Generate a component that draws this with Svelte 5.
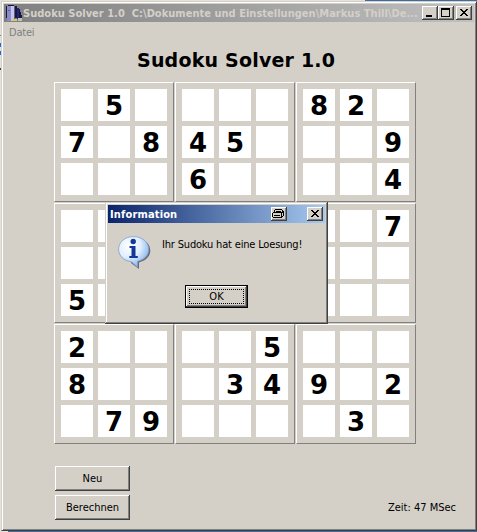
<script>
  const boxes = [
    [0, 5, 0, 7, 0, 8, 0, 0, 0],
    [0, 0, 0, 4, 5, 0, 6, 0, 0],
    [8, 2, 0, 0, 0, 9, 0, 0, 4],
    [0, 0, 0, 0, 0, 0, 5, 0, 0],
    [0, 0, 0, 0, 0, 0, 0, 0, 0],
    [0, 0, 7, 0, 0, 0, 0, 0, 0],
    [2, 0, 0, 8, 0, 0, 0, 7, 9],
    [0, 0, 5, 0, 3, 4, 0, 0, 0],
    [0, 0, 0, 9, 0, 2, 0, 3, 0]
  ];
</script>

<div class="desktop">
  <div class="window">
    <header class="bar">
      <svg class="app" width="16" height="16" viewBox="0 0 16 16" shape-rendering="crispEdges">
        <path fill="#181830" d="M0 1h2v12H0zM2 0h6v1H2zM9 1h2v12H9zM13 4h1v3h1v3h1v3h-3z" />
        <path fill="#8c8ccc" d="M1 1h4v15H1z" />
        <path fill="#c4c4ec" d="M5 1h3v15H5z" />
        <path fill="#5c5c94" d="M8 1h1v14H8zM2 5h2v1H2z" />
        <path fill="#20208c" d="M11 3h2v11h-2z" />
        <path fill="#d8cc40" d="M7 14h4v2H7z" />
        <path fill="#c0c0c0" d="M12 13h4v3h-4z" />
      </svg>
      <span class="caption">Sudoku Solver 1.0&nbsp; C:\Dokumente und Einstellungen\Markus Thill\De...</span>
      <button class="tb" aria-label="Minimize"><svg width="16" height="14" shape-rendering="crispEdges"><path d="M4 9h6v2H4z" /></svg></button>
      <button class="tb" aria-label="Maximize"><svg width="16" height="14" shape-rendering="crispEdges"><path fill-rule="evenodd" d="M3 2h9v9H3zM4 4v6h7V4z" /></svg></button>
      <button class="tb close" aria-label="Close"><svg width="16" height="14" shape-rendering="crispEdges"><path d="M4 3h2v1h1v1h2v-1h1v-1h2v1h-1v1h-1v1h-1v1h1v1h1v1h1v1h-2v-1h-1v-1h-2v1h-1v1h-2v-1h1v-1h1v-1h1v-1h-1v-1h-1v-1h-1z" /></svg></button>
    </header>
    <nav>Datei</nav>
    <h1>Sudoku Solver 1.0</h1>
    <main>
      {#each boxes as box}
        <div class="box">
          {#each box as n}
            <div class="cell">{n || ''}</div>
          {/each}
        </div>
      {/each}
    </main>
    <footer>
      <div class="actions">
        <button class="btn">Neu</button>
        <button class="btn">Berechnen</button>
      </div>
      <span class="time">Zeit: 47 MSec</span>
    </footer>
  </div>

  <div class="dialog" role="dialog">
    <header class="dbar">
      <span class="dcap">Information</span>
      <button class="tb print" aria-label="Print"><svg width="16" height="14" shape-rendering="crispEdges"><path d="M4 2h7v1H4zM3 3h1v2H3zM11 3h1v2h-1zM5 4h5v1H5zM2 5h10v1H2zM1 6h1v4H1zM10 6h1v5h-1zM12 4h1v5h-1zM3 8h6v1H3zM2 10h9v1H2zM11 9h1v1h-1z" /></svg></button>
      <button class="tb close" aria-label="Close"><svg width="16" height="14" shape-rendering="crispEdges"><path d="M4 3h2v1h1v1h2v-1h1v-1h2v1h-1v1h-1v1h-1v1h1v1h1v1h1v1h-2v-1h-1v-1h-2v1h-1v1h-2v-1h1v-1h1v-1h1v-1h-1v-1h-1v-1h-1z" /></svg></button>
    </header>
    <div class="body">
      <svg class="info" width="33" height="33" viewBox="0 0 33 33">
        <defs>
          <radialGradient id="bub" cx=".35" cy=".3" r=".75">
            <stop offset="0" stop-color="#fff" /><stop offset=".5" stop-color="#e2effd" /><stop offset="1" stop-color="#7fb0ec" />
          </radialGradient>
        </defs>
        <path fill="#4a5068" opacity=".8" d="M17 2C26 2 32.300 7.500 32.300 14.500c0 6-4.500 10-11.300 12v6.500l-8-6z" />
        <path fill="url(#bub)" stroke="#7f9fce" stroke-width=".8" d="M15.500.6C24 .6 30.700 6 30.700 13.300c0 6-4.200 10.500-11.200 12V31L13 25.500C6 25 .6 20 .6 13.300.6 6 7 .6 15.500.6z" />
        <circle cx="15.200" cy="5.500" r="2.700" fill="#12389a" />
        <path fill="#12389a" d="M11.500 10h6v10h2.300v2h-8.500v-2h2.200v-8h-2z" />
      </svg>
      <span class="msg">Ihr Sudoku hat eine Loesung!</span>
    </div>
    <button class="ok"><span class="focus">OK</span></button>
  </div>
</div>

<style>
  :global(body) { margin: 0; }
  * { box-sizing: border-box; }
  .desktop {
    position: relative; width: 477px; height: 532px; overflow: hidden; padding: 1px 0 0 1px;
    background: linear-gradient(#3a6ea5, #3a6ea5) 365px 0 / 112px 1px no-repeat, linear-gradient(#3a6ea5, #3a6ea5) 8px 531px / 469px 1px no-repeat,
      linear-gradient(#1670d8, #1670d8) 0 43px / 1px 4px no-repeat, linear-gradient(#1670d8, #1670d8) 0 51px / 1px 4px no-repeat,
      linear-gradient(#404040, #404040) 0 68px / 1px 2px no-repeat, linear-gradient(#808080, #808080) 0 35px / 1px 1px no-repeat, #e4e2dc;
    font: 11px "DejaVu Sans Condensed", "DejaVu Sans", sans-serif; color: #000;
  }
  .window {
    width: 476px; height: 530px; background: #d4d0c8; display: flex; flex-direction: column; padding: 1px;
    border: 1px solid; border-color: #d4d0c8 #404040 #404040 #d4d0c8;
    box-shadow: inset 1px 1px #fff, inset -1px -1px #808080;
  }
  .bar { height: 18px; margin: 1px 1px 0; flex: none; display: flex; align-items: center; background: linear-gradient(90deg, #808080, #c0c0c0); padding: 0 2px; }
  .app { flex: none; margin-right: 1px; }
  .caption { flex: 1; white-space: nowrap; font: bold 11px/18px "DejaVu Sans Condensed", sans-serif; color: #d4d0c8; letter-spacing: .02px; width: 0; padding-top: 1px; }
  .tb { flex: none; width: 16px; height: 14px; padding: 0; border: 0; background: #d4d0c8; box-shadow: inset -1px -1px #404040, inset 1px 1px #fff, inset -2px -2px #808080; display: flex; }
  .tb svg { display: block; }
  .close { margin-left: 2px; }
  nav { height: 21px; padding: 1px 0 0 6px; line-height: 19px; color: #808080; letter-spacing: -.2px; }
  h1 { margin: 3px 0 0 134px; height: 32px; font: bold 19px/28px "DejaVu Sans", sans-serif; letter-spacing: .2px; white-space: nowrap; }
  main { margin: 4px 0 0 51px; display: grid; grid-template-columns: repeat(3, 120px); grid-auto-rows: 120px; gap: 1px; flex: none; }
  .box { display: grid; grid-template-columns: repeat(3, 32px); grid-auto-rows: 32px; gap: 5px; padding: 6px; border: 1px solid; border-color: #fff #808080 #808080 #fff; }
  .cell { background: #fff; text-align: center; font: bold 26px/34px "DejaVu Sans", sans-serif; height: 32px; }
  footer { display: flex; justify-content: space-between; align-items: flex-end; margin: 22px 19px 0 52px; }
  .actions { display: flex; flex-direction: column; gap: 4px; }
  .btn { width: 75px; height: 25px; padding: 0 0 1px; border: 0; background: #d4d0c8; font: inherit; box-shadow: inset -1px -1px #404040, inset 1px 1px #fff, inset -2px -2px #808080; }
  .time { line-height: 14px; margin-bottom: 5px; white-space: nowrap; }
  .dialog {
    position: absolute; left: 105px; top: 202px; width: 223px; height: 122px; background: #d4d0c8; padding: 3px;
    box-shadow: inset -1px -1px #404040, inset 1px 1px #d4d0c8, inset -2px -2px #808080, inset 2px 2px #fff;
  }
  .dbar { height: 18px; display: flex; align-items: center; padding: 0 2px; background: linear-gradient(90deg, #0a246a, #a6caf0); }
  .dcap { flex: 1; color: #fff; font: bold 11px/18px "DejaVu Sans Condensed", sans-serif; letter-spacing: .15px; padding-top: 1px; }
  .print { margin-right: 18px; }
  .body { display: flex; padding: 13px 0 0 10px; }
  .info { flex: none; }
  .msg { margin: 2px 0 0 11px; line-height: 14px; white-space: nowrap; letter-spacing: -.18px; }
  .ok { display: block; width: 63px; height: 23px; margin: 16px 0 0 77px; padding: 3px; border: 1px solid #000; background: #d4d0c8; font: inherit; box-shadow: inset -1px -1px #404040, inset 1px 1px #fff, inset -2px -2px #808080; }
  .focus { display: block; height: 15px; border: 1px dotted #000; line-height: 13px; }
</style>
